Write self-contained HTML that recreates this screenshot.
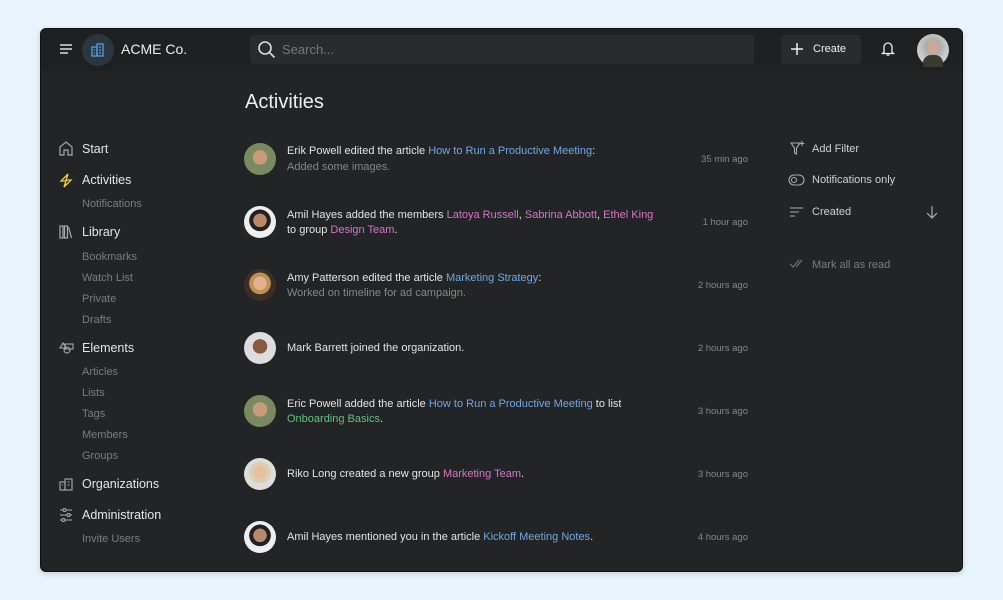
<!DOCTYPE html>
<html><head><meta charset="utf-8"><style>
*{box-sizing:border-box;margin:0;padding:0}
body{width:1003px;height:600px;background:#e9f3fd;font-family:"Liberation Sans",sans-serif;position:relative;overflow:hidden}
.app{position:absolute;left:40px;top:28px;width:923px;height:544px;background:#232426;border:1px solid #111;border-radius:6px;overflow:hidden;box-shadow:0 2px 6px rgba(0,0,0,.15)}
.hdr{position:absolute;left:0;top:0;width:100%;height:42px;background:#1f2022}
.a{position:absolute;white-space:nowrap}
.side{color:#e6e6e6;font-size:12.5px}
.sub{color:#7b7c7f;font-size:11px}
.t{color:#e4e4e4;font-size:11px}
.g{color:#85868a;font-size:11px}
.tm{color:#85868a;font-size:9.5px;right:214px;text-align:right}
.bl{color:#6ea8e6}.pk{color:#d576c9}.gr{color:#5fc27c}
.av{position:absolute;left:203px;width:32px;height:32px;border-radius:50%;overflow:hidden}
.rt{color:#d0d0d0;font-size:11px}
svg{position:absolute}
</style></head><body>
<div class="app">
<div class="hdr"></div>
<svg style="left:18px;top:14px" width="14" height="12" viewBox="0 0 14 12" fill="none" stroke="#ddd" stroke-width="1.4"><path d="M1 2h12M1 6h12M1 10h8"/></svg>
<div class="a" style="left:41px;top:5px;width:32px;height:32px;border-radius:50%;background:#2b3640"></div>
<svg style="left:50px;top:14px" width="14" height="14" viewBox="0 0 14 14" fill="none" stroke="#5aa6ee" stroke-width="1.2"><rect x="1" y="4" width="5" height="9"/><rect x="6" y="1" width="6" height="12"/><path d="M8 4h2M8 7h2M8 10h2M3 7h1M3 10h1"/></svg>
<div class="a" style="left:80px;top:12px;color:#eee;font-size:14px">ACME Co.</div>
<div class="a" style="left:209px;top:6px;width:504px;height:29px;background:#2a2b2d;border-radius:3px"></div>
<svg style="left:216px;top:11px" width="19" height="19" viewBox="0 0 19 19" fill="none" stroke="#ddd" stroke-width="1.6"><circle cx="8" cy="8" r="6"/><path d="M12.5 12.5l5 5"/></svg>
<div class="a" style="left:241px;top:13px;color:#777;font-size:13px">Search...</div>
<div class="a" style="left:740px;top:6px;width:80px;height:29px;background:#2a2b2d;border-radius:3px"></div>
<svg style="left:749px;top:13px" width="14" height="14" viewBox="0 0 14 14" stroke="#eee" stroke-width="1.5"><path d="M7 1v12M1 7h12"/></svg>
<div class="a" style="left:772px;top:14px;color:#eee;font-size:11px">Create</div>
<svg style="left:840px;top:12px" width="14" height="16" viewBox="0 0 14 16" fill="none" stroke="#eee" stroke-width="1.3"><path d="M3 11V6a4 4 0 018 0v5l1.5 1.5h-11z M5.5 14h3"/></svg>
<div class="a" style="left:876px;top:5px;width:32px;height:32px;border-radius:50%;background:radial-gradient(circle at 50% 40%,#c9a99a 0 25%,#aaa 26%,#ccc 60%);"><div style="position:absolute;left:6px;top:21px;width:20px;height:12px;background:#3a3a30;border-radius:8px 8px 0 0"></div></div>

<svg style="left:18px;top:112px" width="14" height="15" viewBox="0 0 14 15" fill="none" stroke="#aaa" stroke-width="1.2"><path d="M1 14V6l6-5 6 5v8h-4V9H5v5z"/></svg>
<div class="a side" style="left:41px;top:113px">Start</div>
<svg style="left:18px;top:144px" width="14" height="15" viewBox="0 0 14 15" fill="none" stroke="#f0d040" stroke-width="1.3"><path d="M9 1L2 8h5l-2 6 7-7H7z"/></svg>
<div class="a side" style="left:41px;top:144px">Activities</div>
<div class="a sub" style="left:41px;top:169px">Notifications</div>
<svg style="left:18px;top:196px" width="14" height="14" viewBox="0 0 14 14" fill="none" stroke="#aaa" stroke-width="1.2"><rect x="1" y="1" width="3" height="12"/><rect x="5.5" y="1" width="3" height="12"/><path d="M9.5 2l3 11"/></svg>
<div class="a side" style="left:41px;top:196px">Library</div>
<div class="a sub" style="left:41px;top:222px">Bookmarks</div>
<div class="a sub" style="left:41px;top:243px">Watch List</div>
<div class="a sub" style="left:41px;top:264px">Private</div>
<div class="a sub" style="left:41px;top:285px">Drafts</div>
<svg style="left:18px;top:312px" width="15" height="14" viewBox="0 0 15 14" fill="none" stroke="#aaa" stroke-width="1.1"><path d="M1 7l3-5 3 5z"/><rect x="6" y="3" width="8" height="5"/><circle cx="8" cy="9" r="3"/></svg>
<div class="a side" style="left:41px;top:312px">Elements</div>
<div class="a sub" style="left:41px;top:337px">Articles</div>
<div class="a sub" style="left:41px;top:358px">Lists</div>
<div class="a sub" style="left:41px;top:379px">Tags</div>
<div class="a sub" style="left:41px;top:400px">Members</div>
<div class="a sub" style="left:41px;top:421px">Groups</div>
<svg style="left:18px;top:449px" width="14" height="13" viewBox="0 0 14 13" fill="none" stroke="#aaa" stroke-width="1.1"><rect x="1" y="4" width="5" height="8"/><rect x="6" y="1" width="7" height="11"/><path d="M8.5 4h2M8.5 7h2M3 7h1"/></svg>
<div class="a side" style="left:41px;top:448px">Organizations</div>
<svg style="left:18px;top:479px" width="14" height="14" viewBox="0 0 14 14" fill="none" stroke="#aaa" stroke-width="1.1"><path d="M1 2h3M7 2h6M1 7h7M11 7h2M1 12h2M6 12h7"/><circle cx="5.5" cy="2" r="1.5"/><circle cx="9.5" cy="7" r="1.5"/><circle cx="4.5" cy="12" r="1.5"/></svg>
<div class="a side" style="left:41px;top:479px">Administration</div>
<div class="a sub" style="left:41px;top:504px">Invite Users</div>

<div class="a" style="left:204px;top:62px;color:#eee;font-size:20px">Activities</div>

<div class="av" style="top:114px;background:radial-gradient(circle at 50% 45%,#c89a7a 0 30%,#7a8a60 31%)"></div>
<div class="a t" style="left:246px;top:116px">Erik Powell edited the article <span class="bl">How to Run a Productive Meeting</span>:</div>
<div class="a g" style="left:246px;top:132px">Added some images.</div>
<div class="a tm" style="top:125px">35 min ago</div>

<div class="av" style="top:177px;background:radial-gradient(circle at 50% 45%,#b88a6a 0 28%,#222 29% 45%,#eee 46%)"></div>
<div class="a t" style="left:246px;top:180px">Amil Hayes added the members <span class="pk">Latoya Russell</span>, <span class="pk">Sabrina Abbott</span>, <span class="pk">Ethel King</span></div>
<div class="a t" style="left:246px;top:195px">to group <span class="pk">Design Team</span>.</div>
<div class="a tm" style="top:188px">1 hour ago</div>

<div class="av" style="top:240px;background:radial-gradient(circle at 50% 45%,#e0b090 0 28%,#c09050 29% 45%,#3a3028 46%)"></div>
<div class="a t" style="left:246px;top:243px">Amy Patterson edited the article <span class="bl">Marketing Strategy</span>:</div>
<div class="a g" style="left:246px;top:258px">Worked on timeline for ad campaign.</div>
<div class="a tm" style="top:251px">2 hours ago</div>

<div class="av" style="top:303px;background:radial-gradient(circle at 50% 45%,#8a5a40 0 30%,#ddd 31%)"></div>
<div class="a t" style="left:246px;top:313px">Mark Barrett joined the organization.</div>
<div class="a tm" style="top:314px">2 hours ago</div>

<div class="av" style="top:366px;background:radial-gradient(circle at 50% 45%,#c89a7a 0 30%,#7a8a60 31%)"></div>
<div class="a t" style="left:246px;top:369px">Eric Powell added the article <span class="bl">How to Run a Productive Meeting</span> to list</div>
<div class="a t" style="left:246px;top:384px"><span class="gr">Onboarding Basics</span>.</div>
<div class="a tm" style="top:377px">3 hours ago</div>

<div class="av" style="top:429px;background:radial-gradient(circle at 50% 45%,#e8c0a0 0 28%,#d8d0b0 29% 45%,#ddd 46%)"></div>
<div class="a t" style="left:246px;top:439px">Riko Long created a new group <span class="pk">Marketing Team</span>.</div>
<div class="a tm" style="top:440px">3 hours ago</div>

<div class="av" style="top:492px;background:radial-gradient(circle at 50% 45%,#b88a6a 0 28%,#222 29% 45%,#eee 46%)"></div>
<div class="a t" style="left:246px;top:502px">Amil Hayes mentioned you in the article <span class="bl">Kickoff Meeting Notes</span>.</div>
<div class="a tm" style="top:503px">4 hours ago</div>

<svg style="left:749px;top:111px" width="15" height="16" viewBox="0 0 15 16" fill="none" stroke="#aaa" stroke-width="1.1"><path d="M1 3h9l-3.5 5v6l-2-1V8z M12 1v5M9.5 3.5h5"/></svg>
<div class="a rt" style="left:771px;top:114px">Add Filter</div>
<svg style="left:747px;top:145px" width="17" height="12" viewBox="0 0 17 12" fill="none" stroke="#aaa" stroke-width="1.1"><rect x="1" y="1" width="15" height="10" rx="5"/><circle cx="6" cy="6" r="2.5"/></svg>
<div class="a rt" style="left:771px;top:145px">Notifications only</div>
<svg style="left:749px;top:177px" width="14" height="12" viewBox="0 0 14 12" stroke="#aaa" stroke-width="1.1"><path d="M0 2h13M0 6h9M0 10h5"/></svg>
<div class="a rt" style="left:771px;top:177px">Created</div>
<svg style="left:885px;top:176px" width="12" height="14" viewBox="0 0 12 14" fill="none" stroke="#aaa" stroke-width="1.2"><path d="M6 1v12M1 8l5 5 5-5"/></svg>
<svg style="left:748px;top:230px" width="15" height="10" viewBox="0 0 15 10" fill="none" stroke="#777" stroke-width="1.1"><path d="M1 5l3 3 6-7M7 8l6-7"/></svg>
<div class="a" style="left:771px;top:230px;color:#7b7c7f;font-size:11px">Mark all as read</div>
</div>
</body></html>
